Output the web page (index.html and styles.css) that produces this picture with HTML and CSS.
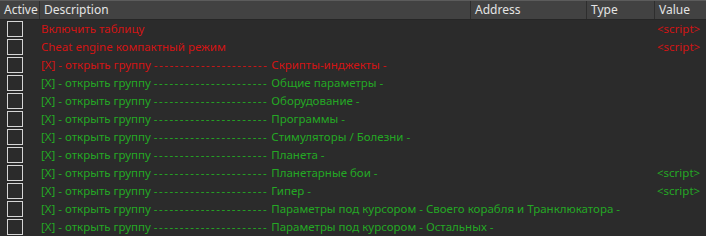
FILE: index.html
```html
<!DOCTYPE html>
<html lang="en">
<head>
    <meta charset="UTF-8">
    <title>Cheat Table</title>
    <link rel="stylesheet" href="styles.css">
</head>
<body>
    <div class="table">
        <div class="head">
            <div class="col c-active">Active</div>
            <div class="col c-desc">Description</div>
            <div class="col c-addr">Address</div>
            <div class="col c-type">Type</div>
            <div class="col c-val">Value</div>
        </div>

        <div class="row red">
            <div class="c-active"><span class="box"></span></div>
            <div class="c-desc">Включить таблицу</div>
            <div class="c-addr"></div>
            <div class="c-type"></div>
            <div class="c-val">&lt;script&gt;</div>
        </div>
        <div class="row red">
            <div class="c-active"><span class="box"></span></div>
            <div class="c-desc">Cheat engine компактный режим</div>
            <div class="c-addr"></div>
            <div class="c-type"></div>
            <div class="c-val">&lt;script&gt;</div>
        </div>
        <div class="row red">
            <div class="c-active"><span class="box"></span></div>
            <div class="c-desc">[X] - открыть группу <span class="dash">----------------------</span> Скрипты-инджекты -</div>
            <div class="c-addr"></div>
            <div class="c-type"></div>
            <div class="c-val"></div>
        </div>
        <div class="row">
            <div class="c-active"><span class="box"></span></div>
            <div class="c-desc">[X] - открыть группу <span class="dash">----------------------</span> Общие параметры -</div>
            <div class="c-addr"></div>
            <div class="c-type"></div>
            <div class="c-val"></div>
        </div>
        <div class="row">
            <div class="c-active"><span class="box"></span></div>
            <div class="c-desc">[X] - открыть группу <span class="dash">----------------------</span> Оборудование -</div>
            <div class="c-addr"></div>
            <div class="c-type"></div>
            <div class="c-val"></div>
        </div>
        <div class="row">
            <div class="c-active"><span class="box"></span></div>
            <div class="c-desc">[X] - открыть группу <span class="dash">----------------------</span> Программы -</div>
            <div class="c-addr"></div>
            <div class="c-type"></div>
            <div class="c-val"></div>
        </div>
        <div class="row">
            <div class="c-active"><span class="box"></span></div>
            <div class="c-desc">[X] - открыть группу <span class="dash">----------------------</span> Стимуляторы / Болезни -</div>
            <div class="c-addr"></div>
            <div class="c-type"></div>
            <div class="c-val"></div>
        </div>
        <div class="row">
            <div class="c-active"><span class="box"></span></div>
            <div class="c-desc">[X] - открыть группу <span class="dash">----------------------</span> Планета -</div>
            <div class="c-addr"></div>
            <div class="c-type"></div>
            <div class="c-val"></div>
        </div>
        <div class="row">
            <div class="c-active"><span class="box"></span></div>
            <div class="c-desc">[X] - открыть группу <span class="dash">----------------------</span> Планетарные бои -</div>
            <div class="c-addr"></div>
            <div class="c-type"></div>
            <div class="c-val">&lt;script&gt;</div>
        </div>
        <div class="row">
            <div class="c-active"><span class="box"></span></div>
            <div class="c-desc">[X] - открыть группу <span class="dash">----------------------</span> Гипер -</div>
            <div class="c-addr"></div>
            <div class="c-type"></div>
            <div class="c-val">&lt;script&gt;</div>
        </div>
        <div class="row">
            <div class="c-active"><span class="box"></span></div>
            <div class="c-desc">[X] - открыть группу <span class="dash">----------------------</span> Параметры под курсором - Своего корабля и Транклюкатора -</div>
            <div class="c-addr"></div>
            <div class="c-type"></div>
            <div class="c-val"></div>
        </div>
        <div class="row">
            <div class="c-active"><span class="box"></span></div>
            <div class="c-desc">[X] - открыть группу <span class="dash">----------------------</span> Параметры под курсором - Остальных -</div>
            <div class="c-addr"></div>
            <div class="c-type"></div>
            <div class="c-val"></div>
        </div>
    </div>
</body>
</html>
```

FILE: styles.css
```css
body {
    margin: 0;
    padding: 0;
    background-color: #2b2b2b;
    font-family: "Noto Sans", "Open Sans", sans-serif;
    font-size: 11.5px;
    overflow: hidden;
}
.table {
    width: 706px;
}
.head,
.row {
    display: grid;
    grid-template-columns: 40px 431px 116px 68px 51px;
}
.head {
    height: 18px;
    background-color: #424242;
    border-top: 1px solid #5c5c5c;
    border-bottom: 1px solid #262626;
    color: #e4e4e4;
    font-size: 12px;
    line-height: 18px;
}
.head .col {
    padding-left: 4px;
    border-right: 1px solid #2e2e2e;
}
.head .c-val {
    border-right: none;
}
.row {
    height: 18px;
    line-height: 18px;
    color: #24a824;
}
.row.red {
    color: #d21414;
}
.row .c-desc {
    padding-left: 1px;
    white-space: nowrap;
    overflow: visible;
}
.dash {
    letter-spacing: 1.5px;
}
.row .c-val {
    padding-left: 2px;
    white-space: nowrap;
}
.box {
    display: block;
    width: 16px;
    height: 16px;
    margin: 1px 0 0 7px;
    border: 1px solid #d6d6d6;
    box-sizing: border-box;
}
```
